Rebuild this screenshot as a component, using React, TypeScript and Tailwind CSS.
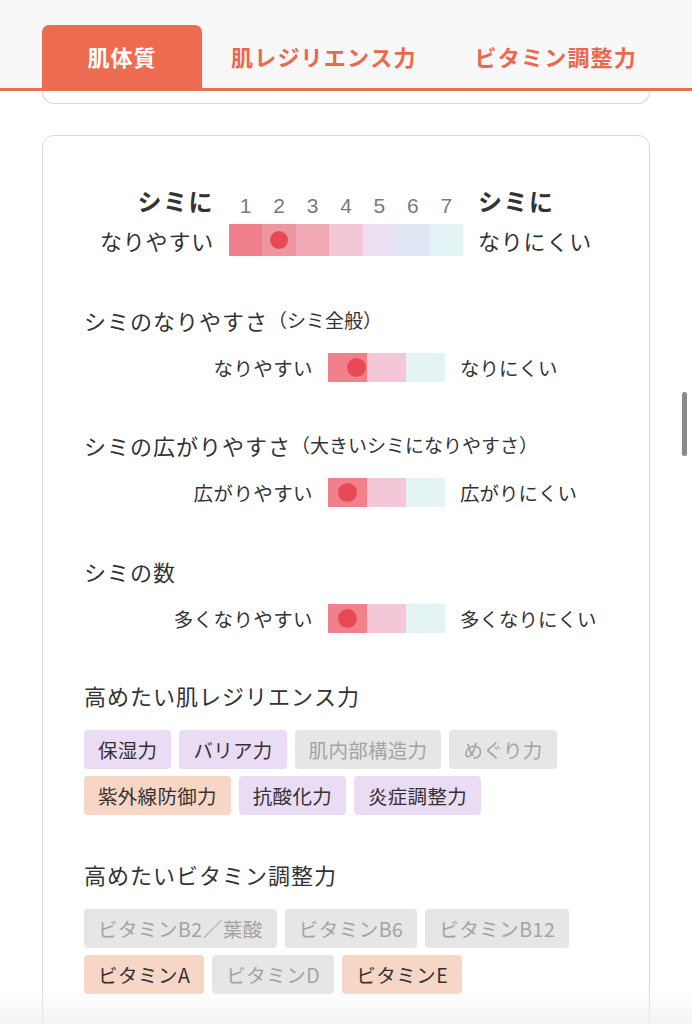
import React from "react";

type TagKind = "on" | "off" | "key";

const tagStyle: Record<TagKind, string> = {
  on: "bg-[#ebdcf5] text-[#333333]",
  off: "bg-[#e6e6e6] text-[#a3a3a3]",
  key: "bg-[#f8d6c6] text-[#333333]",
};

const resilience: [string, TagKind][] = [
  ["保湿力", "on"],
  ["バリア力", "on"],
  ["肌内部構造力", "off"],
  ["めぐり力", "off"],
  ["紫外線防御力", "key"],
  ["抗酸化力", "on"],
  ["炎症調整力", "on"],
];

const vitamins: [string, TagKind][] = [
  ["ビタミンB2／葉酸", "off"],
  ["ビタミンB6", "off"],
  ["ビタミンB12", "off"],
  ["ビタミンA", "key"],
  ["ビタミンD", "off"],
  ["ビタミンE", "key"],
];

const bigCells = ["#f0808c", "#ec96a1", "#f2a9b6", "#f3c7d8", "#ecdff2", "#e0e5f3", "#e4f3f4"];

function Tags({ items, wide }: { items: [string, TagKind][]; wide?: boolean }) {
  return (
    <div className="flex flex-wrap gap-x-[8px] gap-y-[7px] mt-[20px]">
      {items.map(([label, kind]) => (
        <span
          key={label}
          className={`h-[39px] px-[14px] rounded-[4px] flex items-center text-[19.5px] leading-none ${
            wide ? "tracking-[0.5px]" : "tracking-[0.3px]"
          } ${tagStyle[kind]}`}
        >
          {label}
        </span>
      ))}
    </div>
  );
}

function SmallBar({
  title,
  sub,
  left,
  right,
  dotLeft,
  mt,
}: {
  title: string;
  sub?: string;
  left: string;
  right: string;
  dotLeft: string;
  mt: string;
}) {
  return (
    <div className={mt}>
      <div className="h-[30px] flex items-center text-[22px] tracking-[1px] text-[#333333]">
        {title}
        {sub && <span className="text-[19px] tracking-normal">{sub}</span>}
      </div>
      <div className="flex items-center mt-[18px]">
        <div className="w-[229px] text-right text-[19.5px] tracking-[0.4px] text-[#333333] leading-none">{left}</div>
        <div className="relative flex ml-[15px] h-[29px]">
          <div className="w-[39px] bg-[#f0808c]" />
          <div className="w-[39px] bg-[#f3c7d8]" />
          <div className="w-[39px] bg-[#e4f3f4]" />
          <span className={`absolute top-[5px] w-[19px] h-[19px] rounded-full bg-[#e84a54] ${dotLeft}`} />
        </div>
        <div className="ml-[15px] text-[19.5px] text-[#333333] leading-none">{right}</div>
      </div>
    </div>
  );
}

export default function App() {
  return (
    <div className="relative w-full h-[1024px] overflow-hidden bg-white [font-kerning:none] font-['Noto_Sans_CJK_JP','Noto_Sans',sans-serif]">
      {/* tab header */}
      <div className="bg-[#f8f8f8] border-b-[3px] border-[#e8705a]">
        <div className="flex items-end h-[88px] pl-[42px]">
          <div className="w-[160px] h-[66px] -mb-[3px] pb-[3px] rounded-t-[7px] bg-[#ec6b51] flex items-center justify-center text-white text-[22px] font-bold tracking-[1px]">
            肌体質
          </div>
          <div className="h-[63px] pl-[29px] flex items-center text-[#e9684e] text-[22px] font-bold tracking-[1.2px]">
            肌レジリエンス力
          </div>
          <div className="h-[63px] pl-[58px] flex items-center text-[#e9684e] text-[22px] font-bold tracking-[1.2px]">
            ビタミン調整力
          </div>
        </div>
      </div>

      {/* tail of previous card */}
      <div className="mx-[42px] h-[13px] border-x border-b border-[#d6d6d6] rounded-b-[12px]" />

      {/* main card */}
      <div className="mx-[42px] mt-[31px] h-[1000px] border border-[#d9d9d9] rounded-[12px] pl-[41px] pt-[48px]">
        {/* 7-step scale */}
        <div className="grid grid-cols-[130px_234px_auto] gap-x-[15px] gap-y-[6px] text-[#333333]">
          <div className="h-[34px] flex items-center justify-end text-[24px] font-bold leading-none tracking-[1.5px]">シミに</div>
          <div className="h-[34px] grid grid-cols-7 items-end pb-[2px]">
            {[1, 2, 3, 4, 5, 6, 7].map((n) => (
              <span key={n} className="text-center text-[21px] leading-none text-[#7a7a7a] font-['Liberation_Sans',sans-serif]">
                {n}
              </span>
            ))}
          </div>
          <div className="h-[34px] flex items-center text-[24px] font-bold leading-none tracking-[1.5px]">シミに</div>
          <div className="h-[32px] flex items-center justify-end text-[22px] leading-none tracking-[0.8px]">なりやすい</div>
          <div className="h-[32px] grid grid-cols-7">
            {bigCells.map((c, i) => (
              <div key={c} className="flex items-center justify-center" style={{ background: c }}>
                {i === 1 && <span className="w-[18px] h-[18px] rounded-full bg-[#e84a54]" />}
              </div>
            ))}
          </div>
          <div className="h-[32px] flex items-center text-[22px] leading-none tracking-[0.8px]">なりにくい</div>
        </div>

        <SmallBar
          mt="mt-[49px]"
          title="シミのなりやすさ"
          sub="（シミ全般）"
          left="なりやすい"
          right="なりにくい"
          dotLeft="left-[19px]"
        />
        <SmallBar
          mt="mt-[48px]"
          title="シミの広がりやすさ"
          sub="（大きいシミになりやすさ）"
          left="広がりやすい"
          right="広がりにくい"
          dotLeft="left-[10px]"
        />
        <SmallBar
          mt="mt-[49px]"
          title="シミの数"
          left="多くなりやすい"
          right="多くなりにくい"
          dotLeft="left-[10px]"
        />

        <div className="mt-[47px] h-[30px] flex items-center text-[22px] tracking-[1px] text-[#333333]">高めたい肌レジリエンス力</div>
        <Tags items={resilience} />

        <div className="mt-[44px] h-[30px] flex items-center text-[22px] tracking-[1px] text-[#333333]">高めたいビタミン調整力</div>
        <div className="pr-[70px]">
          <Tags items={vitamins} wide />
        </div>
      </div>

      {/* bottom fade */}
      <div className="absolute left-0 right-0 bottom-0 h-[34px] bg-gradient-to-b from-transparent to-[#f1f1f1]/80 pointer-events-none" />

      {/* scroll indicator */}
      <div className="absolute left-[682px] top-[392px] w-[5px] h-[64px] rounded-full bg-[#8a8a8a]" />
    </div>
  );
}
